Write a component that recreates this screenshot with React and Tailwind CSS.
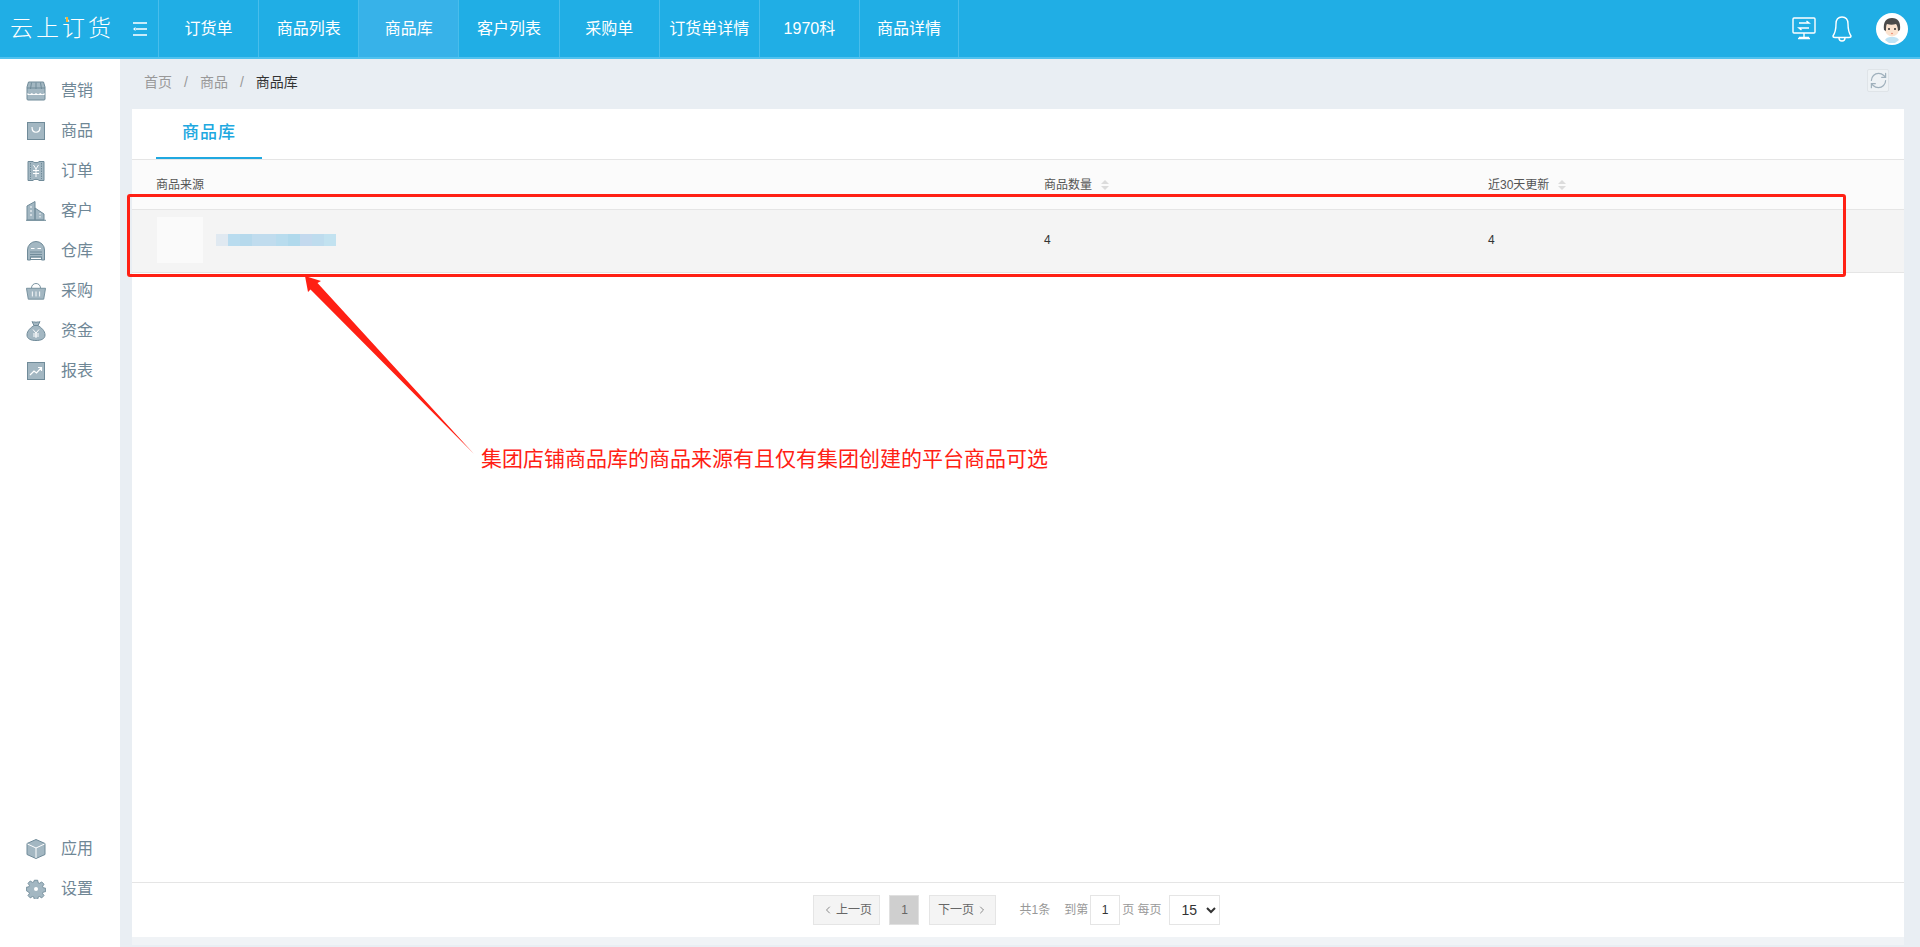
import { RefreshCw, ChevronLeft, ChevronRight } from 'lucide-react'

const FILL = '#a3b7c2'
const LINE = '#708b99'

const ShopIcon = () => (
  <svg width="20" height="20" viewBox="0 0 20 20">
    <path d="M2.5 1h15l1.500 5v12a1 1 0 0 1-1 1H2a1 1 0 0 1-1-1V6z" fill={FILL} stroke={LINE} />
    <path d="M1 7h18M5.500 1.500 4.500 8M10 1.500V8M14.500 1.500l1 6.500" stroke={LINE} fill="none" />
    <path d="M1.500 12c1.500 1.500 3 1.500 4.300 0 1.300 1.500 3 1.500 4.200 0 1.300 1.500 3 1.500 4.200 0 1.300 1.500 3 1.500 4.300 0v2h-17z" fill="#fff" />
  </svg>
)
const BagIcon = () => (
  <svg width="20" height="20" viewBox="0 0 20 20">
    <rect x="1.500" y="1.500" width="17" height="17" fill={FILL} stroke={LINE} />
    <path d="M6 6c0 7 8 7 8 0" stroke="#fff" strokeWidth="1.200" fill="none" />
  </svg>
)
const TicketIcon = () => (
  <svg width="20" height="20" viewBox="0 0 20 20">
    <path d="M2 .5h5c0 1.500 6 1.500 6 0h5v19h-5c0-1.500-6-1.500-6 0H2z" fill={FILL} stroke={LINE} />
    <path d="M4.500 2v16M15.500 2v16" stroke={LINE} strokeDasharray="1.500 1" />
    <path d="M7.500 4 10 8l2.500-4M10 8v8M7 9.500h6M7 12.500h6" stroke="#fff" fill="none" />
  </svg>
)
const BuildingIcon = () => (
  <svg width="20" height="20" viewBox="0 0 20 20">
    <path d="M1 19V5l8-4.500V19zM9 7l9 6v6H9z" fill={FILL} stroke={LINE} />
    <path d="M0 19.300h20" stroke={LINE} />
    <path d="M5 5v12" stroke="#fff" strokeDasharray="2 2" />
    <path d="M14 12v5" stroke="#fff" strokeDasharray="1.500 1.500" />
  </svg>
)
const GarageIcon = () => (
  <svg width="20" height="20" viewBox="0 0 20 20">
    <path d="M1.500 19V9a8.500 8.500 0 0 1 17 0v10h-3v-3h-11v3z" fill={FILL} stroke={LINE} />
    <path d="M5 7.500h3.500M11.500 7.500H15" stroke="#fff" />
    <path d="M4 11h12M4 13.500h12M4 16h12M4 18.500h12" stroke={LINE} />
  </svg>
)
const BasketIcon = () => (
  <svg width="22" height="20" viewBox="0 0 22 20">
    <path d="M6 7c0-7 10-7 10 0" fill="none" stroke={LINE} />
    <path d="M.500 7h21l-2 12h-17z" fill={FILL} stroke={LINE} />
    <path d="M7 10.500V16M11 10.500V16M15 10.500V16" stroke="#fff" />
  </svg>
)
const MoneyIcon = () => (
  <svg width="20" height="20" viewBox="0 0 20 20">
    <path d="M6 .5c1 1 2 0 4 .8 2-.8 3 .2 4-.8l-2 4c3 2 7 5 7 9.500 0 4-4 5.500-9 5.500S1 18 1 14c0-4.500 4-7.500 7-9.500z" fill={FILL} stroke={LINE} />
    <path d="M8 4.500h4" stroke={LINE} />
    <path d="M7 8.500l3 3.500 3-3.500M10 12v5M7 13h6M7 15h6" stroke="#fff" fill="none" />
  </svg>
)
const ChartIcon = () => (
  <svg width="20" height="20" viewBox="0 0 20 20">
    <rect x="1.500" y="1.500" width="17" height="17" fill={FILL} stroke={LINE} />
    <path d="M4 14l4-4 2.500 2L15 7M12 6.500h3.500V10" stroke="#fff" strokeWidth="1.200" fill="none" />
  </svg>
)
const CubeIcon = () => (
  <svg width="20" height="20" viewBox="0 0 20 20">
    <path d="M10 .5l9 4v11l-9 4-9-4v-11z" fill={FILL} stroke={LINE} />
    <path d="M1.500 5l8.500 4 8.500-4M10 9v10" stroke="#fff" fill="none" />
  </svg>
)
const GearIcon = () => (
  <svg width="20" height="20" viewBox="0 0 20 20">
    <path d="M8.200.8h3.600l.5 2.600 1.600.7 2.200-1.500 2.500 2.500-1.500 2.200.7 1.600 2.600.5v3.600l-2.600.5-.7 1.600 1.500 2.200-2.500 2.500-2.200-1.500-1.600.7-.5 2.600H8.200l-.5-2.600-1.600-.7-2.200 1.500-2.500-2.500 1.500-2.200-.7-1.600L-.400 12V8.400l2.600-.5.7-1.600-1.500-2.200 2.500-2.500 2.200 1.500 1.600-.7z" transform="translate(.7 .5) scale(.93)" fill={FILL} stroke={LINE} />
    <circle cx="10" cy="10" r="2" fill="#fff" />
  </svg>
)

const TOP_MENU = [
  { label: '营销', icon: <ShopIcon /> },
  { label: '商品', icon: <BagIcon /> },
  { label: '订单', icon: <TicketIcon /> },
  { label: '客户', icon: <BuildingIcon /> },
  { label: '仓库', icon: <GarageIcon /> },
  { label: '采购', icon: <BasketIcon /> },
  { label: '资金', icon: <MoneyIcon /> },
  { label: '报表', icon: <ChartIcon /> },
]
const BOTTOM_MENU = [
  { label: '应用', icon: <CubeIcon /> },
  { label: '设置', icon: <GearIcon /> },
]
const TABS = ['订货单', '商品列表', '商品库', '客户列表', '采购单', '订货单详情', '1970科', '商品详情']
const MOSAIC = [
  'bg-[#e0e9f1]', 'bg-[#b9dcef]', 'bg-[#b6d9ec]', 'bg-[#c0dcee]', 'bg-[#c0dcee]',
  'bg-[#b8dcee]', 'bg-[#b0d9ec]', 'bg-[#c3d9ee]', 'bg-[#bedcee]', 'bg-[#c2e2f0]',
]

function MenuItem({ item }) {
  return (
    <div className="flex h-10 items-center pl-[26px] text-[16px] text-[#6f8796]">
      <span className="flex w-5 justify-center">{item.icon}</span>
      <span className="ml-[15px]">{item.label}</span>
    </div>
  )
}

function SortArrows() {
  return (
    <svg width="8" height="10" viewBox="0 0 8 10" className="ml-[9px]">
      <path d="M4 0 8 4H0zM4 10 0 6h8z" fill="#dcdcdc" />
    </svg>
  )
}

function Avatar() {
  return (
    <svg width="32" height="32" viewBox="0 0 32 32">
      <circle cx="16" cy="16" r="16" fill="#fff" />
      <path d="M9 27c2-3 4-3 7-3s5 0 7 3l-4 3h-6z" fill="#bfe3f5" />
      <ellipse cx="16" cy="15" rx="7.500" ry="8.500" fill="#fbe3d0" />
      <path d="M8 17c-1-8 2-12 8-12s9 4 8 12l-2 1c0-3-1-6-2-7-3 1-6 1-9 0-1 1-1 4-1 7z" fill="#4b4b4b" />
      <circle cx="13" cy="16" r="1" fill="#333" />
      <circle cx="19" cy="16" r="1" fill="#333" />
      <ellipse cx="16" cy="20.500" rx="1" ry=".7" fill="#f08a70" />
    </svg>
  )
}

export default function App() {
  return (
    <div className="relative flex h-[947px] w-[1920px] flex-col overflow-hidden bg-[#e9eef3] font-['Liberation_Sans','Noto_Sans_CJK_SC',sans-serif]">
      <header className="flex h-[59px] shrink-0 items-stretch border-b-2 border-[#50c2ef] bg-[#20aee5] text-white">
        <div className="relative flex w-[122px] items-center pl-[10px] text-[23px] font-light leading-none tracking-[3px]">
          云上订货
          <span className="absolute left-[66px] top-[17px] h-[5px] w-[2px] bg-[#f5b335]" />
        </div>
        <div className="flex w-9 items-center justify-start pl-[10px]">
          <svg width="16" height="14" viewBox="0 0 16 14" fill="none" stroke="#fff" strokeWidth="1.300">
            <path d="M1 1h14M4 7h11M1 13h14" />
            <path d="M3.500 5 1 7l2.500 2z" fill="#fff" stroke="none" />
          </svg>
        </div>
        {TABS.map((t, i) => (
          <div
            key={t}
            className={`flex w-[100.150px] items-center justify-center border-l border-[#49bdeb] text-[16px] ${i === 2 ? 'bg-[#37b2e9]' : ''} ${i === TABS.length - 1 ? 'border-r' : ''}`}
          >
            {t}
          </div>
        ))}
        <div className="ml-auto flex items-center pr-3">
          <svg width="24" height="23" viewBox="0 0 24 23" fill="none" stroke="#fff" strokeWidth="1.400">
            <rect x="1" y="1" width="22" height="15" rx="1" />
            <path d="M12 16v4M6 21.500h12M7 20.500h10" />
            <path d="M7 6h10l-2.500-2M17 11H7l2.500 2" />
          </svg>
          <svg width="20" height="26" viewBox="0 0 20 26" fill="none" stroke="#fff" strokeWidth="1.400" className="ml-4">
            <path d="M10 1c-4 0-6 3-6 7 0 6-1 9-3 12 0 1 1 1.500 2 1.500h14c1 0 2-.5 2-1.500-2-3-3-6-3-12 0-4-2-7-6-7z" />
            <path d="M7 22c0 4 6 4 6 0" />
          </svg>
          <span className="ml-6 flex"><Avatar /></span>
        </div>
      </header>

      <div className="flex min-h-0 flex-1">
        <aside className="flex w-[120px] shrink-0 flex-col justify-between bg-white pb-[38px] pt-3">
          <div>{TOP_MENU.map(m => <MenuItem key={m.label} item={m} />)}</div>
          <div>{BOTTOM_MENU.map(m => <MenuItem key={m.label} item={m} />)}</div>
        </aside>

        <main className="flex min-w-0 flex-1 flex-col pl-3 pr-4">
          <div className="flex h-[50px] shrink-0 items-start justify-between">
            <div className="mt-[13px] flex items-center pl-3 text-[14px] text-[#999]">
              <span>首页</span>
              <span className="mx-3">/</span>
              <span>商品</span>
              <span className="mx-3">/</span>
              <span className="text-[#333]">商品库</span>
            </div>
            <button className="mr-[15px] mt-[10px] flex h-[23px] w-[22px] items-center justify-center rounded-[2px] border border-[#dfe4e8] bg-[#eef2f5] text-[#9fb0bc]">
              <RefreshCw size={19} strokeWidth={1.500} />
            </button>
          </div>

          <section className="flex min-h-0 flex-1 flex-col bg-white">
            <div className="flex h-[51px] shrink-0 border-b border-[#e5e5e5] pl-6">
              <div className="flex h-[50px] w-[106px] items-center justify-center border-b-2 border-[#20a8e0] text-[17px] font-medium tracking-[1px] text-[#20a8e0]">
                商品库
              </div>
            </div>
            <div className="grid h-[50px] shrink-0 grid-cols-[888px_444px_1fr] border-b border-[#e5e5e5] bg-[#fbfbfb] text-[12px] text-[#555]">
              <div className="flex items-center pl-6">商品来源</div>
              <div className="flex items-center pl-6">商品数量<SortArrows /></div>
              <div className="flex items-center pl-6">近30天更新<SortArrows /></div>
            </div>
            <div className="grid h-[63px] shrink-0 grid-cols-[888px_444px_1fr] border-b border-[#e5e5e5] bg-[#f4f4f4] pb-[2px] text-[12px] text-[#333]">
              <div className="flex items-center pl-[25px]">
                <div className="h-[46px] w-[46px] bg-[#fafafa]" />
                <div className="ml-[13px] flex h-3">
                  {MOSAIC.map((c, i) => <span key={i} className={`h-3 w-3 ${c}`} />)}
                </div>
              </div>
              <div className="flex items-center pl-6">4</div>
              <div className="flex items-center pl-6">4</div>
            </div>

            <div className="flex-1" />

            <div className="flex h-[55px] shrink-0 items-center justify-center border-t border-[#e5e5e5] pr-[3px] text-[12px]">
              <button className="flex h-[30px] w-[67px] items-center justify-center gap-[2px] border border-[#e5e5e5] bg-[#f4f4f4] text-[#666]">
                <ChevronLeft size={12} strokeWidth={1.500} />上一页
              </button>
              <span className="ml-[9px] flex h-[30px] w-[30px] items-center justify-center border border-[#e0e0e0] bg-[#cfcfcf] text-[#666]">1</span>
              <button className="ml-[10px] flex h-[30px] w-[67px] items-center justify-center gap-[2px] border border-[#e5e5e5] bg-[#f4f4f4] text-[#666]">
                下一页<ChevronRight size={12} strokeWidth={1.500} />
              </button>
              <span className="ml-[23px] text-[#999]">共1条</span>
              <span className="ml-[14px] text-[#999]">到第</span>
              <input
                readOnly
                value="1"
                className="ml-[2px] h-[30px] w-[30px] border border-[#e5e5e5] bg-white text-center text-[12px] text-[#333] outline-none"
              />
              <span className="ml-[2px] text-[#999]">页 每页</span>
              <select defaultValue="15" className="ml-[7px] h-[30px] w-[51px] border border-[#e5e5e5] bg-white pl-2 text-[14px] text-[#333] outline-none">
                <option value="15">15</option>
                <option value="30">30</option>
                <option value="50">50</option>
              </select>
            </div>
          </section>

          <div className="h-2 shrink-0 bg-[#f0f3f6]" />
          <div className="h-[2px] shrink-0" />
        </main>
      </div>

      {/* annotation drawn over the screenshot */}
      <div className="absolute left-[127px] top-[194px] h-[83px] w-[1719px] rounded-[3px] border-[3px] border-[#ff2014]" />
      <svg width="200" height="200" viewBox="0 0 200 200" className="absolute left-[290px] top-[265px]">
        <path d="M15 11 31 16 27.500 18 184 189 20.500 24.500 18 27z" fill="#ff2014" />
      </svg>
      <div className="absolute left-[481px] top-[445px] text-[21px] leading-7 text-[#ff2014]">
        集团店铺商品库的商品来源有且仅有集团创建的平台商品可选
      </div>
    </div>
  )
}
